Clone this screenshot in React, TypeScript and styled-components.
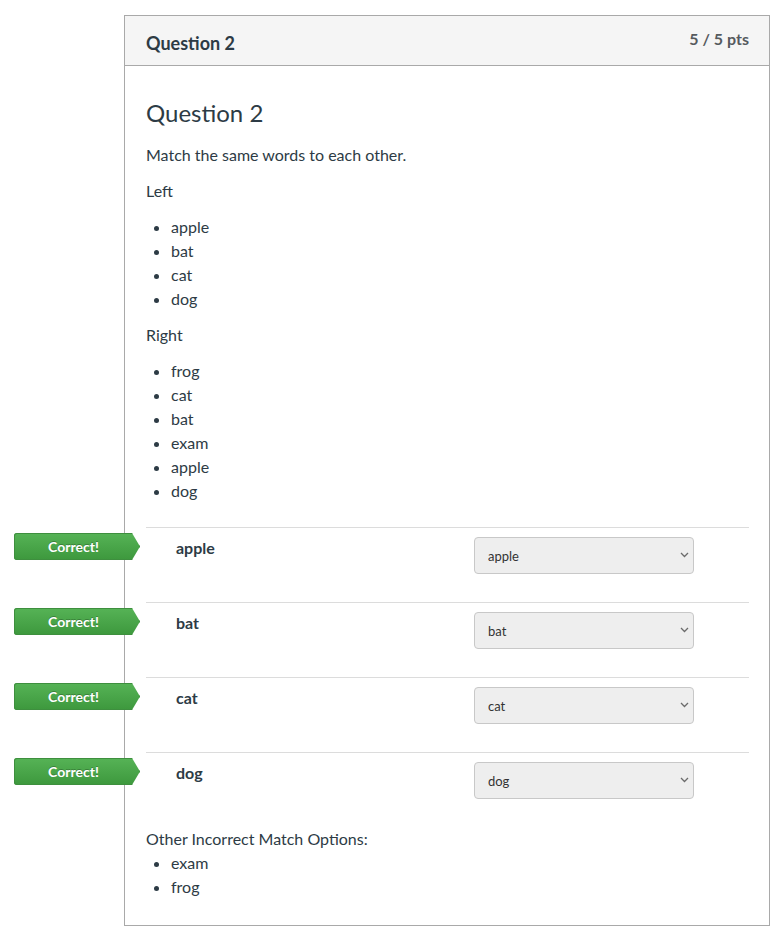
import React from "react";
import styled, { createGlobalStyle } from "styled-components";

const Global = createGlobalStyle`
  html, body { margin: 0; padding: 0; background: #fff; }
  body { font-family: Lato, "Open Sans", "Liberation Sans", sans-serif; color: #2d3b45; }
  * { box-sizing: border-box; }
`;

const Page = styled.div`
  padding: 15px 3px 3px 124px;
  width: 773px;
`;

const Card = styled.section`
  border: 1px solid #a9a9a9;
  width: 646px;
  background: #fff;
`;

const Header = styled.header`
  display: flex;
  justify-content: space-between;
  align-items: flex-start;
  height: 50px;
  padding: 0 20px 0 21px;
  background: #f5f5f5;
  border-bottom: 1px solid #a9a9a9;
`;

const HeaderTitle = styled.h2`
  margin: 15px 0 0;
  font-size: 18px;
  line-height: 24px;
  font-weight: 700;
  color: #2d3b45;
`;

const Points = styled.div`
  margin-top: 11px;
  font-size: 16px;
  line-height: 24px;
  font-weight: 700;
  color: #555a5e;
`;

const Body = styled.div`
  padding: 32px 20px 14px 21px;
`;

const Title = styled.h3`
  margin: 0 0 15px;
  font-size: 24px;
  line-height: 30px;
  font-weight: 400;
  color: #2d3b45;
`;

const Para = styled.p`
  margin: 0 0 12px;
  font-size: 16px;
  line-height: 24px;
`;

const List = styled.ul`
  margin: 0 0 12px;
  padding-left: 25px;
  font-size: 16px;
  line-height: 24px;
`;

const Matches = styled.div`
  margin-top: 24px;
`;

const Row = styled.div`
  position: relative;
  display: grid;
  grid-template-columns: 298px 220px;
  align-items: start;
  height: 75px;
  padding: 8px 0 0 30px;
  border-top: 1px solid #dcdcdc;
`;

const Label = styled.div`
  font-size: 16px;
  line-height: 24px;
  font-weight: 700;
  color: #2d3b45;
`;

const SelectWrap = styled.div`
  position: relative;
  margin-top: 1px;
  width: 220px;
  height: 37px;
`;

const Select = styled.select`
  appearance: none;
  -webkit-appearance: none;
  display: block;
  width: 220px;
  height: 37px;
  padding: 0 24px 0 13px;
  font-family: Lato, "Open Sans", "Liberation Sans", sans-serif;
  font-size: 13px;
  color: #333;
  background: #eeeeee;
  border: 1px solid #c8c8c8;
  border-radius: 4px;
  outline: none;
`;

const Chevron = styled.svg`
  position: absolute;
  right: 5px;
  top: 15px;
  width: 9px;
  height: 6px;
  pointer-events: none;
`;

const Badge = styled.div`
  position: absolute;
  left: -132px;
  top: 5px;
  width: 126px;
  height: 27px;
  display: flex;
  align-items: center;
  clip-path: polygon(0 0, 118px 0, 126px 50%, 118px 100%, 0 100%);
  background: linear-gradient(#56b356, #3d983d);
  border-radius: 3px 0 0 3px;
  box-shadow: inset 0 0 0 1px #3e8f3e;
  color: #fff;
  font-size: 14px;
  font-weight: 700;
  text-shadow: 0 -1px 0 rgba(0, 0, 0, 0.25);
`;

const BadgeText = styled.span`
  width: 119px;
  text-align: center;
`;

const OtherHeading = styled.div`
  font-size: 16px;
  line-height: 24px;
`;

const pairs = ["apple", "bat", "cat", "dog"];
const rightOptions = ["frog", "cat", "bat", "exam", "apple", "dog"];

export default function App() {
  return (
    <Page>
      <Global />
      <Card>
        <Header>
          <HeaderTitle>Question 2</HeaderTitle>
          <Points>5 / 5 pts</Points>
        </Header>
        <Body>
          <Title>Question 2</Title>
          <Para>Match the same words to each other.</Para>
          <Para>Left</Para>
          <List>
            {pairs.map((w) => (
              <li key={w}>{w}</li>
            ))}
          </List>
          <Para>Right</Para>
          <List>
            {rightOptions.map((w) => (
              <li key={w}>{w}</li>
            ))}
          </List>
          <Matches>
            {pairs.map((w) => (
              <Row key={w}>
                <Badge>
                  <BadgeText>Correct!</BadgeText>
                </Badge>
                <Label>{w}</Label>
                <SelectWrap>
                  <Select defaultValue={w}>
                    {rightOptions.map((o) => (
                      <option key={o} value={o}>
                        {o}
                      </option>
                    ))}
                  </Select>
                  <Chevron viewBox="0 0 9 6" aria-hidden="true">
                    <path d="M1 1 L4.5 4.5 L8 1" fill="none" stroke="#6b6b6b" strokeWidth="1.3" />
                  </Chevron>
                </SelectWrap>
              </Row>
            ))}
          </Matches>
          <OtherHeading>Other Incorrect Match Options:</OtherHeading>
          <List>
            <li>exam</li>
            <li>frog</li>
          </List>
        </Body>
      </Card>
    </Page>
  );
}
